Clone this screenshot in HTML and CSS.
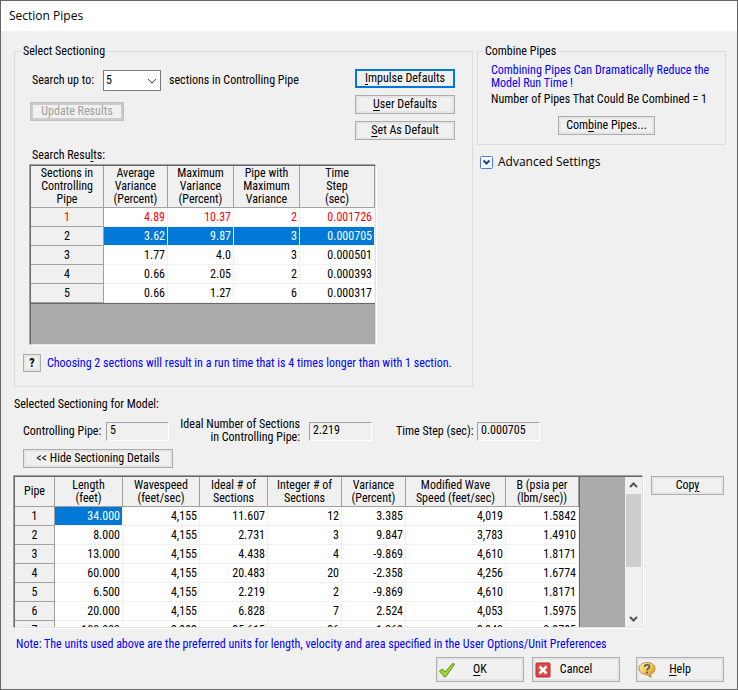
FILE: index.html
```html
<!DOCTYPE html>
<html lang="en">
<head>
<meta charset="utf-8">
<title>Section Pipes</title>
<link rel="stylesheet" href="styles.css">
</head>
<body>
<main class="dialog">
  <h1 class="titlebar">Section Pipes</h1>
  <form class="content">
    <div class="top">
      <fieldset class="group select-group">
        <legend>Select Sectioning</legend>
        <div class="search">
          <div class="search-left">
            <div class="search-row">
              <label for="upto">Search up to:</label>
              <span class="combo">
                <select id="upto"><option>5</option></select>
                <svg class="chevron" viewBox="0 0 10 6"><path d="M1 1l4 4 4-4" fill="none" stroke="#444"/></svg>
              </span>
              <span>sections in Controlling Pipe</span>
            </div>
            <button type="button" class="btn update" disabled>Update Results</button>
          </div>
          <div class="search-right">
            <button type="button" class="btn primary"><u>I</u>mpulse Defaults</button>
            <button type="button" class="btn"><u>U</u>ser Defaults</button>
            <button type="button" class="btn"><u>S</u>et As Default</button>
          </div>
        </div>
        <div class="results">
          <h2 class="caption" id="results-caption">Search Resu<u>l</u>ts:</h2>
          <div class="grid-box results-box">
            <table class="grid" aria-labelledby="results-caption">
              <colgroup><col class="w73"><col class="w64"><col class="w66"><col class="w66"><col class="w75"></colgroup>
              <thead><tr><th>Sections in<br>Controlling<br>Pipe</th><th>Average<br>Variance<br>(Percent)</th><th>Maximum<br>Variance<br>(Percent)</th><th>Pipe with<br>Maximum<br>Variance</th><th>Time<br>Step<br>(sec)</th></tr></thead>
              <tbody>
                <tr class="red"><th>1</th><td>4.89</td><td>10.37</td><td>2</td><td>0.001726</td></tr>
                <tr class="selected"><th>2</th><td>3.62</td><td>9.87</td><td>3</td><td>0.000705</td></tr>
                <tr><th>3</th><td>1.77</td><td>4.0</td><td>3</td><td>0.000501</td></tr>
                <tr><th>4</th><td>0.66</td><td>2.05</td><td>2</td><td>0.000393</td></tr>
                <tr><th>5</th><td>0.66</td><td>1.27</td><td>6</td><td>0.000317</td></tr>
              </tbody>
            </table>
          </div>
        </div>
        <div class="hint">
          <button type="button" class="btn question">?</button>
          <span class="blue">Choosing 2 sections will result in a run time that is 4 times longer than with 1 section.</span>
        </div>
      </fieldset>
      <div class="side">
        <fieldset class="group combine">
          <legend>Combine Pipes</legend>
          <p class="blue">Combining Pipes Can Dramatically Reduce the Model Run Time !</p>
          <p>Number of Pipes That Could Be Combined = 1</p>
          <button type="button" class="btn combine-btn">Com<u>b</u>ine Pipes...</button>
        </fieldset>
        <button type="button" class="advanced">
          <svg viewBox="0 0 13 13"><rect x=".5" y=".5" width="12" height="12" rx="1" fill="#f5f8ff" stroke="#4a7be0"/><path d="M3.5 4.500l3 3 3-3" fill="none" stroke="#24479c" stroke-width="2"/></svg>
          Advanced Settings
        </button>
      </div>
    </div>

    <h2 class="section-title">Selected Sectioning for Model:</h2>
    <div class="fields">
      <label for="pipe">Controlling Pipe:</label><input id="pipe" value="5" readonly>
      <label for="ideal" class="two-line">Ideal Number of Sections<br>in Controlling Pipe:</label><input id="ideal" value="2.219" readonly>
      <label for="step" class="step-label">Time Step (sec):</label><input id="step" value="0.000705" readonly>
    </div>
    <button type="button" class="btn hide">&lt;&lt; Hide Sectioning Details</button>

    <div class="details">
      <div class="grid-box details-box">
        <div class="viewport">
          <table class="grid detail-grid">
            <colgroup><col class="w40"><col class="w68"><col class="w77"><col class="w68"><col class="w74"><col class="w64"><col class="w100"><col class="w73"></colgroup>
            <thead><tr><th>Pipe</th><th>Length<br>(feet)</th><th>Wavespeed<br>(feet/sec)</th><th>Ideal # of<br>Sections</th><th>Integer # of<br>Sections</th><th>Variance<br>(Percent)</th><th>Modified Wave<br>Speed (feet/sec)</th><th>B (psia per<br>(lbm/sec))</th></tr></thead>
            <tbody>
              <tr><th>1</th><td class="current">34.000</td><td>4,155</td><td>11.607</td><td>12</td><td>3.385</td><td>4,019</td><td>1.5842</td></tr>
              <tr><th>2</th><td>8.000</td><td>4,155</td><td>2.731</td><td>3</td><td>9.847</td><td>3,783</td><td>1.4910</td></tr>
              <tr><th>3</th><td>13.000</td><td>4,155</td><td>4.438</td><td>4</td><td>-9.869</td><td>4,610</td><td>1.8171</td></tr>
              <tr><th>4</th><td>60.000</td><td>4,155</td><td>20.483</td><td>20</td><td>-2.358</td><td>4,256</td><td>1.6774</td></tr>
              <tr><th>5</th><td>6.500</td><td>4,155</td><td>2.219</td><td>2</td><td>-9.869</td><td>4,610</td><td>1.8171</td></tr>
              <tr><th>6</th><td>20.000</td><td>4,155</td><td>6.828</td><td>7</td><td>2.524</td><td>4,053</td><td>1.5975</td></tr>
              <tr><th>7</th><td>100.000</td><td>3,983</td><td>35.615</td><td>36</td><td>1.069</td><td>3,940</td><td>0.9785</td></tr>
            </tbody>
          </table>
        </div>
        <div class="scrollbar">
          <svg viewBox="0 0 17 17"><path d="M5 10l3.500-3.500 3.500 3.500" fill="none" stroke="#555" stroke-width="2"/></svg>
          <div class="thumb"></div>
          <svg viewBox="0 0 17 17"><path d="M5 7l3.500 3.500 3.500-3.500" fill="none" stroke="#555" stroke-width="2"/></svg>
        </div>
      </div>
      <button type="button" class="btn copy">Cop<u>y</u></button>
    </div>
    <p class="note blue">Note: The units used above are the preferred units for length, velocity and area specified in the User Options/Unit Preferences</p>
    <div class="actions">
      <button type="button" class="btn action">
        <svg viewBox="0 0 18 18"><path d="M1.500 10l3-2 2.500 3 7.500-8.500 2 .5L8 15.500l-1.500.5z" fill="#a5d22b" stroke="#5f9417"/></svg>
        <span><u>O</u>K</span>
      </button>
      <button type="button" class="btn action">
        <svg viewBox="0 0 18 18"><rect x="2" y="2" width="14" height="14" rx="1" fill="#e04848" stroke="#b52a2e"/><path d="M5.500 5.500l7 7M12.500 5.500l-7 7" stroke="#fff" stroke-width="2.500"/></svg>
        <span>Cancel</span>
      </button>
      <button type="button" class="btn action help">
        <svg viewBox="0 0 18 18"><defs><linearGradient id="gold" x1="0" y1="0" x2="1" y2="1"><stop offset="0" stop-color="#fff3b5"/><stop offset=".5" stop-color="#efc555"/><stop offset="1" stop-color="#c88a1f"/></linearGradient></defs><path d="M9 1.500c4.500 0 8 2.500 8 6 0 3-2 5-4.500 5.500L13 16.500 8.500 13.500C4.500 13.500 1 11 1 7.500s3.500-6 8-6z" fill="url(#gold)" stroke="#b98b3a"/><path d="M6.500 6C6.500 3 11.500 3 11.500 6 11.500 7.500 9 7.500 9 9.500" fill="none" stroke="#555" stroke-width="1.500"/><circle cx="9" cy="11.500" r="1" fill="#555"/></svg>
        <span><u>H</u>elp</span>
      </button>
    </div>
  </form>
</main>
</body>
</html>
```
FILE: styles.css
```css
* { box-sizing: border-box; }
body {
  margin: 0;
  background: #f0f0f0;
  color: #000;
  font: 12px/13px "Roboto Condensed", Roboto, "Liberation Sans", sans-serif;
}
.dialog {
  min-height: 100vh;
  border: 1px solid #666;
}
.titlebar {
  margin: 0;
  padding: 0 8px;
  background: #fff;
  font: 12px/30px "Open Sans", sans-serif;
}
.content { padding: 12px 11px 6px 12px; }
h2, p { margin: 0; font: inherit; }
.blue { color: #00f; }
.top {
  display: grid;
  grid-template-columns: 459fr 249fr;
  gap: 4px;
  padding-left: 1px;
  align-items: start;
}
.group {
  min-width: 0;
  margin: 0;
  border: 1px solid #dcdcdc;
}
legend { padding: 0 2px; line-height: 16px; }
.select-group { padding: 10px 17px 14px 8px; }
.select-group legend { margin-left: -2px; }
.btn {
  height: 19px;
  padding: 0;
  border: 1px solid #adadad;
  box-shadow: inset 0 0 0 2px #e5e5e5;
  background: #f0f0f0;
  color: #000;
  font: inherit;
  white-space: nowrap;
}
.btn u, .caption u { text-underline-offset: 2px; }
.btn.primary { border: 2px solid #0078d7; box-shadow: none; }
.btn:disabled { border-color: #bfbfbf; box-shadow: inset 0 0 0 2px #ccc; color: #a0a0a0; }
.search { display: flex; justify-content: space-between; }
.search-left { padding: 1px 0 0 7px; }
.search-row { display: flex; align-items: center; padding-left: 2px; }
.search-row label { width: 71px; }
.combo { position: relative; width: 58px; margin-right: 8px; }
.combo select {
  display: block;
  width: 100%;
  height: 21px;
  padding: 0 2px;
  border: 1px solid #7a7a7a;
  border-radius: 0;
  background: #fff;
  color: #000;
  font: inherit;
  appearance: none;
}
.chevron { position: absolute; right: 4px; top: 8px; width: 10px; height: 6px; pointer-events: none; }
.update { width: 94px; margin-top: 11px; }
.search-right { display: flex; flex-direction: column; gap: 7px; width: 100px; }
.results { padding: 9px 0 8px 6px; }
.caption { padding: 0 3px 2px; }
.grid-box {
  margin: 1px;
  border: 1px solid;
  border-color: #696969 #e3e3e3 #e3e3e3 #696969;
  box-shadow: -1px -1px 0 #a0a0a0, 1px 1px 0 #fff;
  background: #ababab;
}
.results-box { width: 346px; height: 180px; }
.grid { border-collapse: separate; border-spacing: 0; table-layout: fixed; width: 344px; border-bottom: 1px solid #696969; }
.grid th { padding: 0; border: solid #a0a0a0; border-width: 0 1px 1px 0; background: #f0f0f0; font-weight: normal; text-align: center; white-space: nowrap; }
.grid thead th { height: 42px; }
.grid td { height: 19px; padding: 0 2px; border: solid #f0f0f0; border-width: 0 1px 1px 0; background: #fff; text-align: right; }
.grid .red th, .grid .red td { color: #f00; }
.grid .selected td, .grid .current { background: #0078d7; color: #fff; }
.w40 { width: 40px; } .w64 { width: 64px; } .w66 { width: 66px; } .w68 { width: 68px; }
.w73 { width: 73px; } .w74 { width: 74px; } .w75 { width: 75px; } .w77 { width: 77px; } .w100 { width: 100px; }
.hint { display: flex; align-items: center; gap: 6px; white-space: nowrap; }
.question { flex: none; width: 18px; height: 18px; font-weight: bold; }
.combine { padding: 5px 8px 9px 13px; }
.combine legend { margin-left: -8px; }
.combine p + p { margin-top: 3px; }
.combine-btn { display: block; width: 97px; margin: 10px auto 0 67px; }
.advanced { display: flex; align-items: center; gap: 5px; margin: 9px 0 0 3px; padding: 0; border: 0; background: none; color: #000; font: 12px/16px "Open Sans", sans-serif; }
.advanced svg { width: 13px; height: 13px; }
.section-title { padding: 11px 1px 7px; }
.fields { display: flex; align-items: center; padding-left: 10px; white-space: nowrap; }
.fields label { width: 83px; }
.fields .two-line { width: 120px; margin: 0 9px 0 11px; text-align: right; }
.fields .step-label { width: 81px; margin-left: 24px; }
.fields input { width: 63px; height: 19px; padding: 0 3px 2px; border: 1px solid; border-color: #a0a0a0 #fff #fff #a0a0a0; background: #f0f0f0; color: #000; font: inherit; }
.hide { display: block; width: 150px; margin: 5px 0 7px 10px; }
.details { display: flex; align-items: flex-start; gap: 7px; }
.details-box { display: flex; justify-content: space-between; flex: 0 1 629px; height: 152px; }
.viewport { overflow: hidden; min-width: 0; }
.detail-grid { width: 565px; border-right: 1px solid #696969; }
.detail-grid thead th { height: 30px; }
.scrollbar { display: flex; flex-direction: column; width: 17px; background: #f0f0f0; }
.scrollbar svg { width: 17px; height: 17px; }
.thumb { height: 73px; margin: 0 1px auto; background: #cdcdcd; }
.copy { width: 73px; margin-top: 1px; }
.note { padding: 9px 3px 6px; white-space: nowrap; }
.actions { display: flex; justify-content: flex-end; gap: 8px; padding-right: 2px; }
.action { display: grid; grid-template-columns: 18px 1fr 18px; align-items: center; width: 88px; height: 25px; padding: 0 1px; }
.action svg { width: 18px; height: 18px; }
.help { margin-left: 8px; }
```
